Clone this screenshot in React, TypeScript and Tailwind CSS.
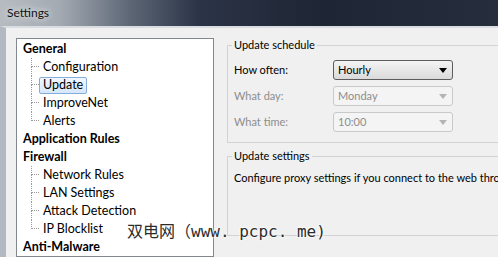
import React from "react";

type Node = { label: string; bold?: boolean; selected?: boolean; last?: boolean; child?: boolean };

const tree: Node[] = [
  { label: "General", bold: true },
  { label: "Configuration", child: true },
  { label: "Update", child: true, selected: true },
  { label: "ImproveNet", child: true },
  { label: "Alerts", child: true, last: true },
  { label: "Application Rules", bold: true },
  { label: "Firewall", bold: true },
  { label: "Network Rules", child: true },
  { label: "LAN Settings", child: true },
  { label: "Attack Detection", child: true },
  { label: "IP Blocklist", child: true, last: true },
  { label: "Anti-Malware", bold: true },
];

function TreeRow({ node }: { node: Node }) {
  if (!node.child) {
    return (
      <div className="h-[18px] flex items-center pl-[6px] font-bold text-black">{node.label}</div>
    );
  }
  return (
    <div className="h-[18px] flex items-stretch pl-[14px]">
      <div className="w-[8px] flex flex-col">
        <div className="h-[9px] border-l border-b border-dotted border-[#9a9a9a]" />
        <div className={"flex-1 border-l border-dotted " + (node.last ? "border-transparent" : "border-[#9a9a9a]")} />
      </div>
      <div className="flex items-center">
        <span
          className={
            "h-[17px] flex items-center px-[3px] rounded-[2px] border " +
            (node.selected
              ? "border-[#84acdd] bg-gradient-to-b from-[#f1f7fe] to-[#d5e7fb]"
              : "border-transparent")
          }
        >
          {node.label}
        </span>
      </div>
    </div>
  );
}

function Arrow({ disabled }: { disabled?: boolean }) {
  return (
    <svg width="8" height="5" viewBox="0 0 8 5" className={disabled ? "fill-[#b4b4b4]" : "fill-black"}>
      <path d="M0 0h8L4 5z" />
    </svg>
  );
}

function Combo({ value, disabled }: { value: string; disabled?: boolean }) {
  return (
    <div
      className={
        "w-[120px] h-[20px] flex items-center justify-between pl-[4px] pr-[5px] rounded-[3px] border " +
        (disabled
          ? "border-[#c9c9c9] bg-[#f4f4f4] text-[#8d8d8d]"
          : "border-[#5c5c5c] bg-gradient-to-b from-[#f4f4f4] to-[#dadada] text-black")
      }
    >
      <span>{value}</span>
      <Arrow disabled={disabled} />
    </div>
  );
}

export default function App() {
  return (
    <div className="relative w-[498px] h-[257px] overflow-hidden bg-[#f0f0f0] text-[12px] leading-[16px] font-['Lato','Noto_Sans',sans-serif] text-black">
      {/* Title bar */}
      <div className="h-[26px] flex items-center pl-[7px] bg-[linear-gradient(to_right,#b7bcc1_0%,#a3aab2_12%,#5d6776_26%,#2b3446_40%,#1e2534_65%,#262e3e_100%)]">
        <span className="text-[#111] [text-shadow:0_0_6px_#e6e8ea,0_0_10px_#d8dbde]">Settings</span>
      </div>

      <div className="flex h-[231px] border-l-[6px] border-l-[#b2b9c1] border-t-2 border-t-[#d9dde2]">
        {/* Tree */}
        <div className="ml-[10px] mt-[10px] w-[198px] shrink-0 border border-[#828790] bg-white pt-[1px] overflow-hidden text-[12.5px]">
          {tree.map((n) => (
            <TreeRow key={n.label} node={n} />
          ))}
        </div>

        {/* Right pane */}
        <div className="ml-[13px] flex flex-col w-[300px] shrink-0 text-[11px]">
          <fieldset className="mt-[9px] border border-[#d3d3d3] pl-[6px] pt-[7px] pb-[10px] m-0">
            <legend className="ml-[-2px] px-[2px]">Update schedule</legend>
            <div className="flex flex-col gap-[6px]">
              <div className="flex items-center">
                <span className="w-[99px]">How often:</span>
                <Combo value="Hourly" />
              </div>
              <div className="flex items-center text-[#8d8d8d]">
                <span className="w-[99px]">What day:</span>
                <Combo value="Monday" disabled />
              </div>
              <div className="flex items-center text-[#8d8d8d]">
                <span className="w-[99px]">What time:</span>
                <Combo value="10:00" disabled />
              </div>
            </div>
          </fieldset>

          <fieldset className="mt-[5px] border border-[#d3d3d3] pl-[6px] pt-[6px] pb-[49px]">
            <legend className="ml-[-2px] px-[2px]">Update settings</legend>
            <div className="whitespace-nowrap">Configure proxy settings if you connect to the web through a proxy server.</div>
          </fieldset>
        </div>
      </div>

      {/* Watermark */}
      <div className="absolute left-[127px] top-[222px] text-[16px] leading-[20px] text-[#2b2b2b] whitespace-nowrap font-['DejaVu_Sans_Mono','Noto_Sans_CJK_SC',monospace] [text-shadow:0_0_2px_#fff,0_0_2px_#fff,0_0_3px_#fff]">
        双电网（www. pcpc. me)
      </div>
    </div>
  );
}
